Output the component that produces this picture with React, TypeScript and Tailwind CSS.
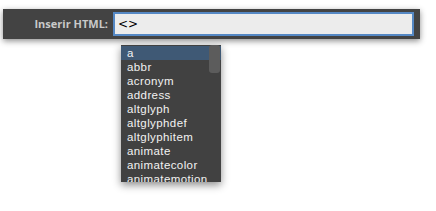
const tags = [
  "a",
  "abbr",
  "acronym",
  "address",
  "altglyph",
  "altglyphdef",
  "altglyphitem",
  "animate",
  "animatecolor",
  "animatemotion",
];

export default function App() {
  return (
    <div className="h-[211px] w-[436px] bg-white pt-[9px] pl-[3px] font-['Liberation_Sans',sans-serif]">
      <div className="flex h-[30px] w-[417px] items-center bg-[#434343] shadow-[0_2px_6px_rgba(0,0,0,0.45)]">
        <label className="w-[110px] pr-[5px] text-right font-['Open_Sans',sans-serif] text-[11px] font-bold text-[#c9c9c9]">
          Inserir HTML:
        </label>
        <div className="flex h-[24px] w-[301px] items-center border-2 border-[#5588c4] bg-[#ececec] pl-[3px] font-['DejaVu_Sans',sans-serif] text-[12px] text-black">
          &lt;&gt;
        </div>
      </div>

      <div className="relative ml-[118px] mt-[6px] h-[137px] w-[100px] overflow-hidden bg-[#414141] shadow-[0_3px_8px_rgba(0,0,0,0.45)]">
        <ul className="pt-[1px]">
          {tags.map((t, i) => (
            <li
              key={t}
              className={
                "h-[14px] pl-[6px] text-[11.5px] leading-[14px] tracking-[0.4px] text-[#f2f2f2] " +
                (i === 0 ? "bg-[#3f5975]" : "")
              }
            >
              {t}
            </li>
          ))}
        </ul>
        <div className="absolute right-[1px] top-0 h-[28px] w-[11px] rounded-[3px] bg-[#5c5c5c]" />
      </div>
    </div>
  );
}
